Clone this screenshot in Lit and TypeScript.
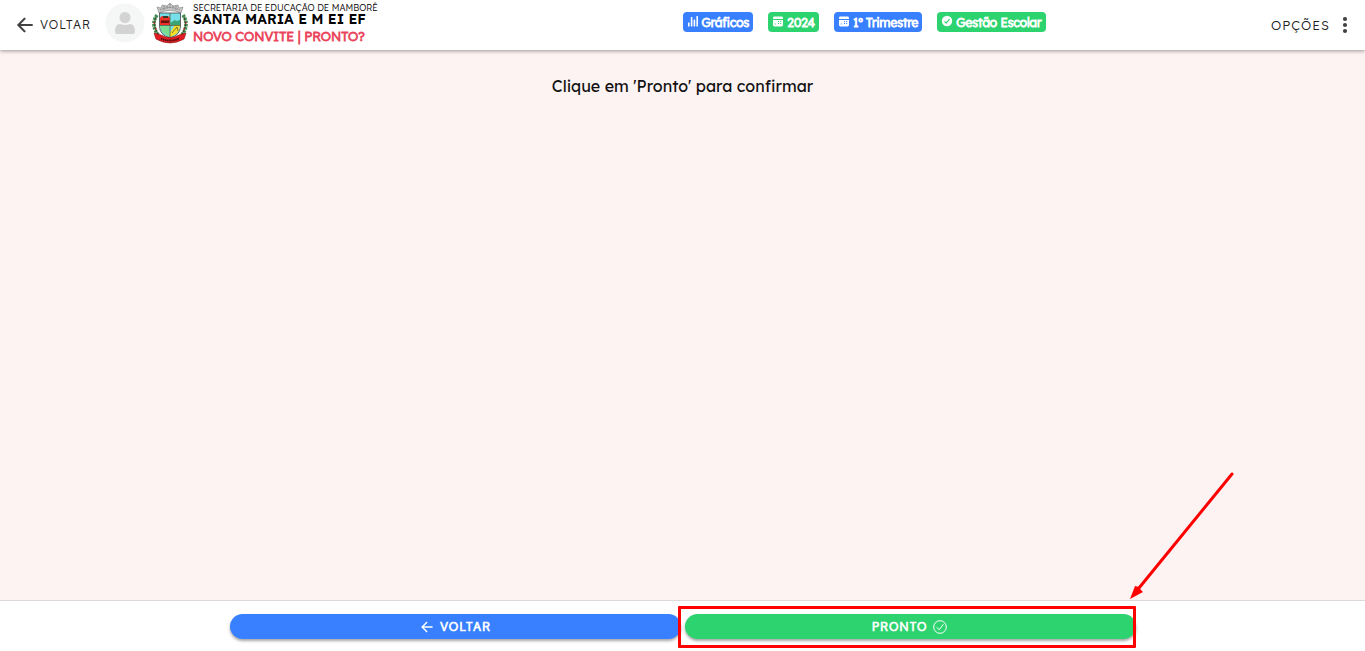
import { LitElement, html, svg, css } from "lit";
import { customElement } from "lit/decorators.js";

const arrowBack = svg`<path d="M244 400 100 256l144-144M120 256h292" fill="none" stroke="currentColor" stroke-width="46" stroke-linecap="square"/>`;

const chartIcon = html`<svg class="badge-icon" viewBox="0 0 12 12" aria-hidden="true">
  <g fill="currentColor"><rect x="1" y="7.500" width="1.600" height="4" rx=".5"/><rect x="3.800" y="2" width="1.600" height="9.500" rx=".5"/><rect x="6.600" y="4.500" width="1.600" height="7" rx=".5"/><rect x="9.400" y="1" width="1.600" height="10.500" rx=".5"/></g>
</svg>`;

const calendarIcon = html`<svg class="badge-icon" viewBox="0 0 12 12" aria-hidden="true">
  <path fill="currentColor" fill-rule="evenodd" d="M1 4V3q0-1.400 1.400-1.400h7.200Q11 1.600 11 3v1zM1 5h10v5q0 1.400-1.400 1.400H2.400Q1 11.400 1 10zM6 6v1h1V6zM8.200 6v1h1V6zM6 8v1h1V8zM8.200 8v1h1V8zM2.800 8.500v1h1v-1z"/>
</svg>`;

const checkIcon = html`<svg class="badge-icon" viewBox="0 0 12 12" aria-hidden="true">
  <circle cx="6" cy="6" r="5.200" fill="currentColor"/><path d="m3.500 6.300 1.700 1.800 3.300-4" fill="none" stroke="#2dd36f" stroke-width="1.100"/>
</svg>`;

const crest = html`<svg class="crest" viewBox="0 0 36 42" role="img" aria-label="Brasão">
  <path d="M7 11 5 5l4 1 1-3 5 1 3-3 3 3 5-1 1 3 4-1-2 6Q18 6 7 11Z" fill="#c4c4c4" stroke="#858585" stroke-width=".6"/>
  <path d="M8 8q10-5 20 0M12 4v4m3-4v3m3-5v5m3-3v3m3-3v4" fill="none" stroke="#777" stroke-width=".8" stroke-dasharray="1.500 1"/>
  <path d="M5 13Q-2 23 7 34M31 13q7 10-2 21" fill="none" stroke="#3f8a50" stroke-width="3.600" stroke-dasharray="2.400 .8"/>
  <path d="M4 15Q0 24 7 34M32 15q4 9-3 19" fill="none" stroke="#314624" stroke-width="1"/>
  <g fill="#d52b2b"><circle cx="2" cy="21" r=".8"/><circle cx="4" cy="27" r=".8"/><circle cx="34" cy="21" r=".8"/><circle cx="32" cy="27" r=".8"/></g>
  <path d="M7.500 11h21v13q0 9-10.500 12Q7.500 33 7.500 24Z" fill="#76dfe9" stroke="#444" stroke-width=".8"/>
  <path d="M8 23v-6q0-3 3-3h4q3 0 3 3v6z" fill="#ee3026"/>
  <path d="M9 21h8v-2.500H9z" fill="#65150f"/><path d="M11 14h5v2h-5z" fill="#3a3a2a"/>
  <path d="m18.500 21 4-3 2 1 3.500-1v5h-9.500z" fill="#3ba477"/>
  <path d="M8 24h9.500v11Q8 31 8 24Z" fill="#7bdd93"/><path d="m18 31 5-8h5q0 9-10 12Z" fill="#f4dd29"/>
  <path d="m20 31 5-6 1 4M18 11v25M8 23.500h20" fill="none" stroke="#514d24" stroke-width=".7"/>
  <path d="m2 31 7 2q9 5 18 0l7-2-2 6q-14 8-28 0Z" fill="#e21c22" stroke="#8c1015" stroke-width=".6"/>
  <path d="M9 36.500q9 4 18 0" fill="none" stroke="#381010" stroke-width="1.800" stroke-dasharray="1.400 .7"/>
</svg>`;

@customElement("app-root")
export class AppRoot extends LitElement {
  static styles = css`
    :host {
      display: flex;
      flex-direction: column;
      min-height: 100vh;
      background: #fdf3f2;
      color: #000;
      font-family: Lexend, Inter, "Noto Sans", sans-serif;
    }
    * { box-sizing: border-box; }
    button { border: 0; font: inherit; cursor: pointer; }
    .header {
      display: grid;
      grid-template-columns: 1fr 1fr;
      height: 50px;
      background: #fff;
      box-shadow: 0 1px 4px rgba(0, 0, 0, 0.4);
    }
    .start { display: flex; align-items: center; padding-left: 14px; min-width: 0; }
    .end { display: flex; justify-content: space-between; align-items: center; }
    .tool {
      display: flex;
      align-items: center;
      gap: 4px;
      padding: 0;
      background: none;
      color: #222;
      font-size: 12px;
      font-weight: 300;
      letter-spacing: 1px;
      line-height: 20px;
    }
    .tool.back { margin-right: 14px; }
    .tool.options { margin-right: 9px; font-size: 13px; }
    .tool-icon { width: 22px; height: 22px; color: #424242; }
    .avatar { width: 40px; height: 40px; margin-bottom: 4px; flex: none; }
    .crest { width: 36px; height: 42px; margin: 0 5px 4px 7px; flex: none; }
    .titles { display: flex; flex-direction: column; white-space: nowrap; margin-bottom: 4px; }
    .org { padding-top: 2px; font-size: 9px; font-weight: 300; line-height: 10px; }
    .school { margin: 0; font-size: 14px; line-height: 13px; font-weight: 600; }
    .page { margin: 0; padding-top: 1px; font-size: 13px; line-height: 18px; font-weight: 300; -webkit-text-stroke: 0.8px #eb445a; color: #eb445a; }
    .badges { display: flex; gap: 15px; margin-bottom: 6px; }
    .badge {
      display: flex;
      align-items: center;
      gap: 3px;
      height: 20px;
      padding: 2px 4px 0;
      border-radius: 4px;
      background: #3880ff;
      color: #fff;
      font-size: 12px;
      line-height: 18px;
      font-weight: 300;
      -webkit-text-stroke: 0.9px #fff;
      white-space: nowrap;
    }
    .badge.success { background: #2dd36f; }
    .badge-icon { width: 12px; height: 12px; margin-bottom: 4px; }
    .content { flex: 1; padding-top: 24px; }
    .message { margin: 0; text-align: center; font-size: 16px; font-weight: 400; line-height: 24px; color: #111; }
    .footer {
      display: grid;
      grid-template-columns: 2fr 4fr 4fr 2fr;
      padding: 13px 0 12px;
      border-top: 1px solid #dfd8d8;
      background: #fff;
    }
    .cell { position: relative; padding: 0 2px; }
    .cell.first { grid-column: 2; }
    .action {
      display: flex;
      justify-content: center;
      align-items: center;
      gap: 5px;
      width: 100%;
      height: 25px;
      padding: 0;
      border-radius: 13px;
      background: #3880ff;
      color: #fff;
      font-size: 12px;
      font-weight: 300;
      -webkit-text-stroke: 0.7px #fff;
      letter-spacing: 1px;
      line-height: 24px;
      box-shadow: 0 2px 3px rgba(0, 0, 0, 0.35);
    }
    .action.success { background: #2dd36f; }
    .action-icon { width: 16px; height: 16px; }
    .highlight {
      position: absolute;
      inset: -8px 2px -9px -5px;
      border: 3px solid #f00;
      border-radius: 1px;
      pointer-events: none;
    }
    .arrow {
      position: absolute;
      right: -97px;
      bottom: 39px;
      width: 106px;
      height: 130px;
      pointer-events: none;
    }
  `;

  render() {
    return html`
      <header class="header">
        <div class="start">
          <button class="tool back"><svg class="tool-icon" viewBox="0 0 512 512" aria-hidden="true">${arrowBack}</svg>VOLTAR</button>
          <svg class="avatar" viewBox="0 0 40 40" role="img" aria-label="Usuário">
            <circle cx="20" cy="20" r="19.500" fill="#f5f6f6"/>
            <circle cx="20" cy="14.500" r="5.500" fill="#d3d3d3"/>
            <path d="M10 29q0-8 5-8 5 2 10 0 5 0 5 8 0 2-2 2H12q-2 0-2-2Z" fill="#d3d3d3"/>
          </svg>
          ${crest}
          <div class="titles">
            <span class="org">SECRETARIA DE EDUCAÇÃO DE MAMBORÊ</span>
            <h1 class="school">SANTA MARIA E M EI EF</h1>
            <h2 class="page">NOVO CONVITE | PRONTO?</h2>
          </div>
        </div>
        <div class="end">
          <div class="badges">
            <span class="badge">${chartIcon}Gráficos</span>
            <span class="badge success">${calendarIcon}2024</span>
            <span class="badge">${calendarIcon}1º Trimestre</span>
            <span class="badge success">${checkIcon}Gestão Escolar</span>
          </div>
          <button class="tool options">OPÇÕES<svg class="tool-icon" viewBox="0 0 22 22" aria-hidden="true">
            <g fill="#424242"><circle cx="11" cy="5" r="2.100"/><circle cx="11" cy="11" r="2.100"/><circle cx="11" cy="17" r="2.100"/></g></svg></button>
        </div>
      </header>
      <main class="content"><p class="message">Clique em 'Pronto' para confirmar</p></main>
      <footer class="footer">
        <div class="cell first">
          <button class="action"><svg class="action-icon" viewBox="0 0 512 512" aria-hidden="true">${arrowBack}</svg>VOLTAR</button>
        </div>
        <div class="cell">
          <button class="action success">PRONTO<svg class="action-icon" viewBox="0 0 16 16" fill="none" stroke="currentColor" aria-hidden="true">
            <circle cx="8" cy="8" r="6.300"/><path d="m5 8.500 2.200 2.300 4-5.300" stroke-linecap="round"/></svg></button>
          <div class="highlight"></div>
          <svg class="arrow" viewBox="0 0 106 130" aria-hidden="true">
            <path d="M103 4 10 118" stroke="#f00" stroke-width="3" stroke-linecap="round"/>
            <path d="M1 129 6 116l4 1 2 3 2 2Z" fill="#f00"/>
          </svg>
        </div>
      </footer>
    `;
  }
}
